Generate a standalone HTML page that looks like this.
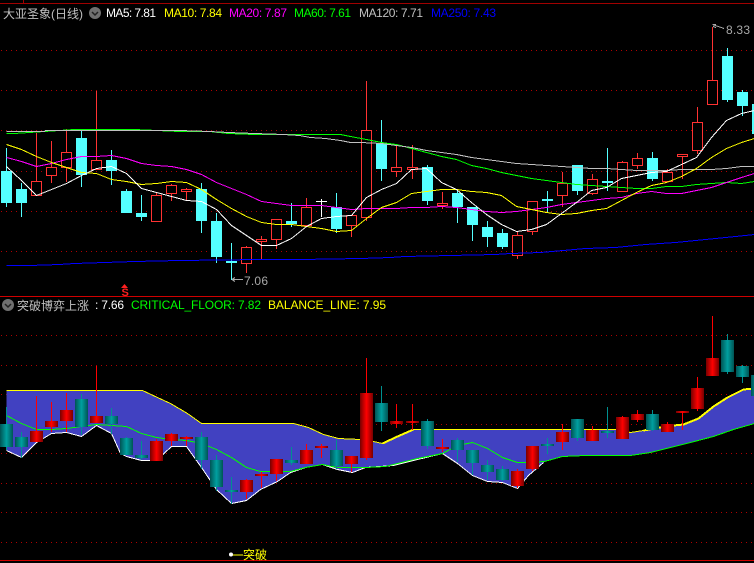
<!DOCTYPE html>
<html lang="zh">
<head>
<meta charset="utf-8">
<title>K线</title>
<style>
html,body{margin:0;padding:0;background:#000;width:754px;height:563px;overflow:hidden}
svg{display:block;position:absolute;left:0;top:0}
text{font-family:"Liberation Sans","WenQuanYi Zen Hei","Noto Sans CJK SC",sans-serif;font-size:12px}
</style>
</head>
<body>
<svg id="c" width="754" height="563" viewBox="0 0 754 563" xmlns="http://www.w3.org/2000/svg">
<defs>
<linearGradient id="gr" x1="0" x2="1" y1="0" y2="0"><stop offset="0" stop-color="#780000"/><stop offset=".5" stop-color="#ff0000"/><stop offset="1" stop-color="#780000"/></linearGradient>
<linearGradient id="gt" x1="0" x2="1" y1="0" y2="0"><stop offset="0" stop-color="#005454"/><stop offset=".5" stop-color="#00a0a0"/><stop offset="1" stop-color="#005454"/></linearGradient>
</defs>
<g id="grid"></g>
<g id="top"></g>
<g id="bot"></g>
<rect x="0" y="3" width="754" height="1" fill="#a00000"/>
<rect x="23" y="0" width="1" height="3" fill="#a00000"/>
<rect x="0" y="296" width="754" height="1" fill="#d00000"/>
<rect x="0" y="560" width="754" height="1" fill="#d00000"/>

<text x="3" y="18" fill="#c0c0c0">大亚圣象(日线)</text>
<circle cx="95" cy="13" r="6" fill="#707070"/>
<path d="M92 12l3 3 3-3" fill="none" stroke="#222" stroke-width="1.5"/>
<text x="106" y="17" fill="#ffffff" textLength="50">MA5: 7.81</text>
<text x="164" y="17" fill="#ffff00" textLength="58">MA10: 7.84</text>
<text x="229" y="17" fill="#ff00ff" textLength="58">MA20: 7.87</text>
<text x="294" y="17" fill="#00ff00" textLength="57">MA60: 7.61</text>
<text x="359" y="17" fill="#c0c0c0" textLength="64">MA120: 7.71</text>
<text x="431" y="17" fill="#0000ff" textLength="65">MA250: 7.43</text>

<circle cx="8" cy="305" r="6" fill="#707070"/>
<path d="M5 304l3 3 3-3" fill="none" stroke="#222" stroke-width="1.5"/>
<text x="17" y="310" fill="#c0c0c0">突破博弈上涨</text>
<text x="95" y="309" fill="#ffffff" textLength="29">: 7.66</text>
<text x="131" y="309" fill="#00ff00" textLength="130">CRITICAL_FLOOR: 7.82</text>
<text x="268" y="309" fill="#ffff00" textLength="118">BALANCE_LINE: 7.95</text>

<text x="726" y="34" fill="#a8a8a8" textLength="24">8.33</text>
<path d="M712.5 24.5H716M712.5 24.5L724 28.5M713 26.5L716 27.5" fill="none" stroke="#a8a8a8" stroke-width="1" shape-rendering="crispEdges"/>
<text x="244" y="285" fill="#a8a8a8" textLength="24">7.06</text>
<path d="M232 279.5H243M232 279.5l3-2M232 279.5l3 2" fill="none" stroke="#a8a8a8" stroke-width="1" shape-rendering="crispEdges"/>

<path d="M124.5 284L128 288H121Z" fill="#ff2020"/>
<text x="121.5" y="296" fill="#ff2020" style="font-size:11px;font-weight:bold">S</text>

<rect x="232" y="554.5" width="11" height="1" fill="#ffff00"/>
<circle cx="231" cy="554.5" r="2" fill="#ffffff"/>
<text x="243" y="559" fill="#ffff00">突破</text>
</svg>
<script>
(function(){
var NS="http://www.w3.org/2000/svg";
function el(p,n,a){var e=document.createElementNS(NS,n);for(var k in a)e.setAttribute(k,a[k]);p.appendChild(e);return e;}
var G=document.getElementById("grid"),T=document.getElementById("top"),B=document.getElementById("bot");
[50,90,130,171,211,251,335,365,394,424,453,483,512,542].forEach(function(y){
  el(G,"line",{x1:1,x2:754,y1:y+.5,y2:y+.5,stroke:"#b00000","stroke-width":1,"stroke-dasharray":"1 4","shape-rendering":"crispEdges"});
});
function pts(a){return a.map(function(p){return (p[0]+.5)+","+(p[1]+.5);}).join(" ");}
function line(p,a,c,w){el(p,"polyline",{points:pts(a),fill:"none",stroke:c,"stroke-width":w||1,"shape-rendering":"crispEdges"});}
// type, wickTop, wickBottom, bodyTop, bodyBottom
var C=[["c",148,207,171,203],["c",183,217,189,203],["r",133,196,181,196],["r",141,183,167,176],["r",129,182,152,168],
["c",131,187,138,175],["r",91,170,160,170],["c",150,185,160,171],["c",189,213,191,213],["c",195,221,213,217],
["r",192,222,195,222],["r",184,201,185,194],["r",188,201,189,192],["c",183,233,189,221],["c",213,263,221,257],
["c",243,280,261,263],["r",246,273,247,264],["r",236,259,239,242],["r",219,249,219,240],["c",203,227,221,224],
["r",198,226,207,226],["w",199,217,201,202],["c",193,233,207,229],["r",215,237,215,226],["r",81,221,130,218],
["c",120,181,143,169],["r",145,177,167,172],["r",145,179,167,170],["c",165,205,167,201],["r",192,209,203,206],
["c",191,223,193,207],["c",207,241,207,225],["c",221,247,227,237],["c",229,249,233,247],["r",232,259,235,256],
["r",201,235,201,232],["c",191,212,199,201],["r",172,207,183,196],["c",165,195,165,191],["r",174,195,179,194],
["c",148,191,181,183],["r",161,192,162,192],["r",153,169,158,166],["c",152,181,158,179],["r",169,182,172,182],
["r",154,179,154,157],["r",107,154,122,151],["r",27,105,80,105],["c",48,102,56,100],["c",90,116,92,106],["c",95,140,104,134]];
function cx(i){return 6+15*i+(i>=27?1:0);}
C.forEach(function(d,i){
  var x=cx(i),t=d[0];
  var col=t=="c"?"#54ffff":t=="w"?"#ffffff":"#ff3232";
  el(T,"rect",{x:x,y:d[1],width:1,height:d[2]-d[1],fill:col,"shape-rendering":"crispEdges"});
  var h=d[4]-d[3];
  el(T,"rect",{x:x-5,y:d[3],width:11,height:Math.max(h,1),fill:col,"shape-rendering":"crispEdges"});
  if(t=="r"&&h>2){el(T,"rect",{x:x-4,y:d[3]+1,width:9,height:h-2,fill:"#000","shape-rendering":"crispEdges"});}
});
// MA lines
var M={
w:[[6,166],[21,180],[36,195],[51,189],[66,183],[81,175],[96,168],[111,166],[126,173],[141,188],[156,192],[171,196],[186,200],[201,201],[216,209],[231,225],[246,235],[261,245],[276,245],[291,238],[306,226],[321,218],[336,216],[351,215],[366,197],[381,189],[396,183],[411,169],[426,168],[441,182],[456,189],[471,202],[486,214],[501,224],[516,231],[531,229],[546,224],[561,213],[576,202],[591,190],[606,187],[621,178],[636,175],[651,172],[666,171],[681,164],[696,157],[711,137],[726,120],[741,113],[754,110]],
y:[[6,144],[21,149],[36,156],[51,162],[66,167],[81,172],[96,173],[111,179],[126,181],[141,184],[156,183],[171,181],[186,182],[201,189],[216,199],[231,208],[246,216],[261,222],[276,224],[291,224],[306,226],[321,228],[336,231],[351,230],[366,218],[381,207],[396,202],[411,193],[426,191],[441,189],[456,189],[471,191],[486,192],[501,195],[516,206],[531,209],[546,212],[561,214],[576,213],[591,210],[606,208],[621,200],[636,192],[651,185],[666,182],[681,176],[696,168],[711,157],[726,148],[741,142],[754,138]],
m:[[6,157],[21,161],[36,166],[51,163],[66,159],[81,156],[96,156],[111,155],[126,158],[141,163],[156,165],[171,166],[186,169],[201,174],[216,182],[231,188],[246,194],[261,201],[276,203],[291,205],[306,205],[321,205],[336,207],[351,209],[366,208],[381,208],[396,208],[411,207],[426,207],[441,206],[456,207],[471,209],[486,211],[501,212],[516,211],[531,209],[546,207],[561,204],[576,202],[591,200],[606,198],[621,197],[636,193],[651,191],[666,193],[681,193],[696,190],[711,187],[726,182],[741,177],[754,173]],
g:[[6,133],[14,133],[29,132],[74,129],[134,129],[179,131],[209,131],[228,133],[254,134],[283,134],[300,134],[340,134],[350,136],[366,139],[381,142],[396,144],[411,148],[426,152],[441,156],[456,159],[471,165],[486,168],[501,172],[516,175],[531,178],[546,180],[561,182],[576,184],[591,185],[606,186],[621,187],[636,188],[651,188],[666,186],[681,186],[696,184],[711,183],[726,182],[741,183],[754,181]],
s:[[6,131],[44,131],[45,130],[179,130],[209,131],[228,132],[254,133],[283,134],[299,135],[310,137],[325,138],[340,140],[350,142],[360,142],[381,143],[396,145],[411,147],[426,150],[441,152],[456,154],[471,157],[486,159],[501,161],[516,163],[531,164],[546,165],[561,166],[576,167],[591,168],[606,168],[621,169],[636,170],[651,170],[666,170],[681,169],[696,169],[711,169],[726,168],[741,166],[754,166]],
b:[[6,265],[29,265],[59,264],[74,263],[104,262],[134,261],[179,260],[260,259],[300,259],[360,258],[390,257],[404,256],[450,255],[495,254],[510,253],[540,252],[585,248],[615,247],[645,244],[675,242],[705,239],[735,236],[754,234]]
};
line(T,M.b,"#0000ff");line(T,M.g,"#00ff00");line(T,M.s,"#c0c0c0");line(T,M.m,"#ff00ff");line(T,M.y,"#ffff00");line(T,M.w,"#ffffff");
// bottom pane
var Y=[[6,390],[142,390],[157,397],[170,403],[187,413],[201,423],[293,423],[308,427],[323,434],[338,438],[360,439],[373,441],[382,443],[397,436],[413,429],[615,429],[630,432],[643,430],[660,427],[673,425],[683,424],[698,418],[713,406],[727,397],[743,389],[754,388]];
var W=[[6,450],[21,457],[36,442],[51,433],[66,432],[81,436],[96,425],[111,433],[120,453],[126,456],[141,460],[156,460],[171,446],[186,446],[201,467],[216,489],[231,503],[246,500],[260,489],[277,481],[290,472],[305,467],[322,464],[337,469],[352,472],[365,467],[393,465],[417,459],[442,453],[457,463],[472,475],[487,481],[502,482],[517,488],[528,475],[543,462]];
var N=[[6,415],[21,423],[36,429],[51,429],[66,428],[81,426],[96,424],[111,425],[126,426],[141,433],[156,437],[171,439],[186,440],[201,443],[216,449],[231,457],[246,467],[260,471],[277,471],[290,471],[305,467],[322,464],[337,467],[365,467],[385,466],[393,464],[417,458],[442,453],[457,445],[472,442],[487,448],[502,457],[517,462],[528,462],[544,461],[562,456],[585,455],[630,455],[650,452],[670,447],[690,442],[713,436],[733,429],[754,423]];
var low=W.concat(N.filter(function(p){return p[0]>543;}));
var poly=Y.concat(low.slice().reverse());
el(B,"polygon",{points:pts(poly),fill:"#4141c1","shape-rendering":"crispEdges"});
line(B,Y,"#ffff00");
line(B,Y.filter(function(p){return p[0]>=382&&p[0]<=413;}),"#ffff00",2);
line(B,Y.filter(function(p){return p[0]>=643;}),"#ffff00",2);
line(B,W,"#ffffff",1);
line(B,N,"#00ff00");
function my(v){return Math.round(317.5+.737*(v-27))+(v>=48&&v<=110?1:0);}
C.forEach(function(d,i){
  var x=cx(i),t=d[0];
  var teal=t=="c";
  var y1=my(d[1]),y2=my(d[2]),b1=my(d[3]),b2=Math.max(my(d[4]),my(d[3])+2);
  if(i==47)y1=316;
  el(B,"rect",{x:x,y:y1,width:1,height:y2-y1,fill:teal?"#009090":"#ff0000","shape-rendering":"crispEdges"});
  el(B,"rect",{x:x-6,y:b1,width:13,height:b2-b1,fill:teal?"url(#gt)":"url(#gr)","shape-rendering":"crispEdges"});
});
})();
</script>
</body>
</html>
